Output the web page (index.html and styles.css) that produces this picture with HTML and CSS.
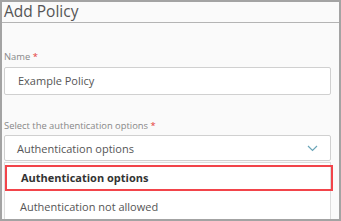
FILE: index.html
```html
<!DOCTYPE html>
<html lang="en">
<head>
  <meta charset="UTF-8">
  <title>Add Policy</title>
  <link rel="stylesheet" href="styles.css">
</head>
<body>
  <div class="dialog">
    <div class="header">
      <h1>Add Policy</h1>
    </div>
    <div class="content">
      <div class="field">
        <label>Name <span class="req">*</span></label>
        <div class="input">Example Policy</div>
      </div>
      <div class="field">
        <label>Select the authentication options <span class="req">*</span></label>
        <div class="select">
          <span>Authentication options</span>
          <svg class="chevron" width="11" height="7" viewBox="0 0 11 7">
            <path d="M1 1 L5.5 5.5 L10 1" fill="none" stroke="#6aa5b8" stroke-width="1.2"/>
          </svg>
        </div>
        <ul class="menu">
          <li class="item selected">Authentication options</li>
          <li class="item">Authentication not allowed</li>
        </ul>
      </div>
    </div>
  </div>
</body>
</html>
```

FILE: styles.css
```css
body {
  margin: 0;
  font-family: "Open Sans", sans-serif;
  color: #555;
}

.dialog {
  width: 341px;
  height: 221px;
  box-sizing: border-box;
  border: 2px solid #a3a3a3;
  background: #fafafa;
  overflow: hidden;
}

.header {
  padding: 0 2px;
  border-bottom: 1px solid #b4b4b4;
}

h1 {
  margin: 0;
  height: 20px;
  font-size: 15.5px;
  font-weight: normal;
  line-height: 19px;
  color: #555;
}

.content {
  padding: 0 8px 0 2px;
}

.field {
  margin-top: 28px;
}

.field + .field {
  margin-top: 25px;
}

label {
  display: block;
  font-size: 9.4px;
  line-height: 12px;
  color: #888;
  margin-bottom: 4px;
}

.field + .field label {
  margin-bottom: 3px;
}

.req {
  color: #e53935;
}

.input,
.select {
  box-sizing: border-box;
  border: 1px solid #d0d0d0;
  border-radius: 2px;
  background: #fff;
  font-size: 11px;
}

.input {
  height: 28px;
  line-height: 26px;
  padding: 0 13px;
}

.select {
  height: 26px;
  display: flex;
  justify-content: space-between;
  align-items: center;
  padding: 0 12px 0 12px;
}

.menu {
  list-style: none;
  margin: 1px 0 0;
  padding: 0;
  background: #fff;
  border: 1px solid #dcdcdc;
  border-bottom: none;
  height: 70px;
}

.item {
  font-size: 11px;
  line-height: 20px;
  padding: 0 15px;
  color: #555;
}

.selected {
  font-weight: bold;
  color: #333;
  border: 2px solid #f2444a;
  margin: 2px -3px 6px 0;
  line-height: 22px;
  padding: 0 14px;
}
```
